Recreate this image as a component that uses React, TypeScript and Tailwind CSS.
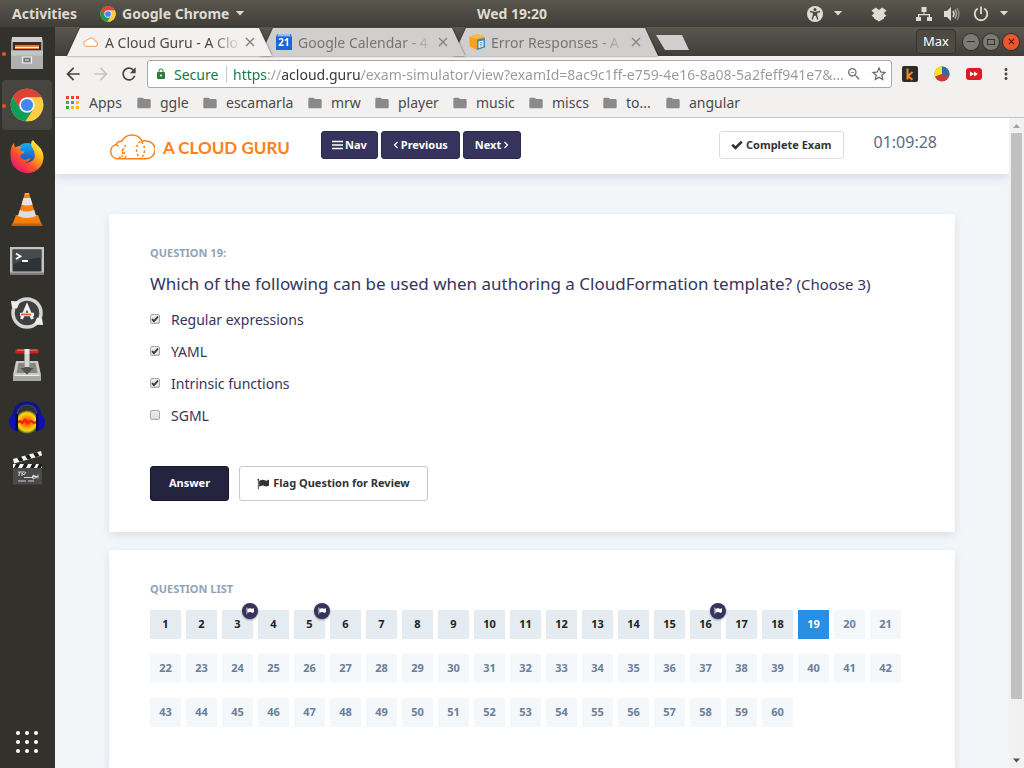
import { useState } from "react";
import type { ReactNode } from "react";
import {
  MdArrowBack,
  MdArrowForward,
  MdRefresh,
  MdLock,
  MdStarBorder,
  MdMoreVert,
  MdFolder,
  MdZoomOut,
} from "react-icons/md";

/* ---------- small icons ---------- */

function ChromeIcon({ className }: { className: string }) {
  return (
    <svg viewBox="0 0 48 48" className={className} aria-hidden="true">
      <circle cx="24" cy="24" r="23" fill="#fcc934" />
      <path d="M24 24 L4.1 12.5 A23 23 0 0 1 43.9 12.5 Z" fill="#db4437" />
      <path d="M24 13 H44.2 A23 23 0 0 0 4.1 12.5 L14 30 Z" fill="#db4437" />
      <path d="M4.1 12.5 A23 23 0 0 0 22 46.9 L33.5 29.5 L24 34 L14.5 30 Z" fill="#0f9d58" />
      <path d="M44.2 13 A23 23 0 0 1 22 46.9 L33.5 29.5 L34 19 L24 13 Z" fill="#ffcd40" />
      <circle cx="24" cy="24" r="11" fill="#f1f1f1" />
      <circle cx="24" cy="24" r="8.6" fill="#4285f4" />
    </svg>
  );
}

function Caret() {
  return (
    <svg viewBox="0 0 10 6" className="h-[5px] w-[10px]" fill="currentColor" aria-hidden="true">
      <path d="M0 0h10L5 5.5z" />
    </svg>
  );
}

function FlagIcon({ className }: { className: string }) {
  return (
    <svg viewBox="0 0 1792 1792" className={className} fill="currentColor" aria-hidden="true">
      <path d="M320 256q0 72-64 110v1266q0 13-9.500 22.500t-22.500 9.500h-64q-13 0-22.500-9.500t-9.500-22.500v-1266q-64-38-64-110 0-53 37.500-90.500t90.500-37.500 90.500 37.500 37.500 90.500zM1792 320v763q0 25-12.500 38.500t-39.500 27.500q-215 116-369 116-61 0-123.500-22t-108.500-48-115.500-48-142.500-22q-192 0-464 146-17 9-33 9-26 0-45-19t-19-45v-742q0-32 31-55 21-14 79-43 236-120 421-120 107 0 200 29t219 88q38 19 88 19 54 0 117.500-21t110-47 88-47 54.500-21q26 0 45 19t19 45z" />
    </svg>
  );
}

function CloudFavicon() {
  return (
    <svg viewBox="0 0 16 16" className="size-4" fill="#fff" stroke="#fbb07a" strokeWidth="1.200" aria-hidden="true">
      <path d="M3.600 12.400a2.900 2.900 0 0 1-.5-5.700A2.600 2.600 0 0 1 5.400 5.300a3.600 3.600 0 0 1 6.300 1.500 2.900 2.900 0 0 1 .9 5.600z" />
    </svg>
  );
}

function CalendarFavicon() {
  return (
    <svg viewBox="0 0 16 16" className="size-4" aria-hidden="true">
      <path d="M0 2h16v14H0z" fill="#1a66d8" />
      <path d="M1 0h14l1 3H0z" fill="#3f86ec" />
      <path d="M2 1h12" stroke="#e6eefc" />
      <text x="8" y="12" textAnchor="middle" fontSize="10" fontWeight="700" fill="#fff" fontFamily="Noto Sans, sans-serif">
        21
      </text>
    </svg>
  );
}

function BoxFavicon() {
  return (
    <svg viewBox="0 0 16 16" className="size-4" aria-hidden="true">
      <path d="M8 0l7.500 2.500v10L8 16 .5 12.500v-10z" fill="#f9a11b" />
      <path d="M8 0l7.500 2.500L8 5 .5 2.500z" fill="#fcbb49" />
      <path d="M8 5.500l8-1.500v9.500L8 16z" fill="#2b8fc9" />
      <path d="M9.500 7.500l5-1v6l-5 1.500z" fill="#fff" />
      <path d="M10.500 8.800l3-.6M10.500 10.500l3-.6M10.500 12.200l3-.7" stroke="#2b8fc9" strokeWidth=".8" />
    </svg>
  );
}

/* ---------- desktop top bar ---------- */

function TopBar() {
  return (
    <header className="grid h-[27px] shrink-0 grid-cols-[1fr_auto_1fr] items-center bg-linear-to-b from-[#5a574e] to-[#403e38] text-[14px] font-bold text-[#dfdbd2]">
      <div className="flex items-center pl-3">
        <button type="button" className="w-[68px] text-left">Activities</button>
        <button type="button" className="ml-5 flex items-center gap-[6px] whitespace-nowrap">
          <ChromeIcon className="size-4" />
          Google Chrome
          <Caret />
        </button>
      </div>
      <time>Wed 19:20</time>
      <div className="flex items-center justify-end pr-[15px]">
        <button type="button" aria-label="Accessibility" className="flex items-center gap-[10px]">
          <svg viewBox="0 0 16 16" className="size-4" aria-hidden="true">
            <circle cx="8" cy="8" r="8" fill="#dfdbd2" />
            <circle cx="8" cy="3.600" r="1.500" fill="#4b4942" />
            <path d="M3 5.500l3.500.8v3L5.200 13.500M13 5.500l-3.500.8v3l1.300 4.200" fill="none" stroke="#4b4942" strokeWidth="1.400" />
            <path d="M6 5.800h4v4H6z" fill="#4b4942" />
          </svg>
          <Caret />
        </button>
        <button type="button" aria-label="Dropbox" className="ml-7">
          <svg viewBox="0 0 16 16" className="size-4" fill="currentColor" aria-hidden="true">
            <path d="M4.800 1.500L8 4l3.200-2.500L15.500 4.500 12.800 7.200l2.700 2.500-2.500 1.800v1L8 15.500l-5-3v-1L.5 9.700 3.200 7.200.5 4.500z" />
          </svg>
        </button>
        <button type="button" aria-label="Network" className="ml-[29px]">
          <svg viewBox="0 0 16 16" className="size-4" fill="currentColor" aria-hidden="true">
            <path d="M5.500 1h5v5h-2v2H14v3h2v4h-5v-4h1.700V9.300H3.300V11H5v4H0v-4h2V8h5.500V6h-2z" />
          </svg>
        </button>
        <button type="button" aria-label="Volume" className="ml-3">
          <svg viewBox="0 0 16 16" className="size-4" fill="none" stroke="currentColor" strokeWidth="1.500" aria-hidden="true">
            <path d="M0 5h3l4-4v14l-4-4H0z" fill="currentColor" stroke="none" />
            <path d="M9 5q2 3 0 6" />
            <path d="M11 3.500q3 4.500 0 9" opacity=".65" />
            <path d="M13 2q4 6 0 12" opacity=".4" />
          </svg>
        </button>
        <button type="button" aria-label="Power" className="ml-[13px] flex items-center gap-[10px]">
          <svg viewBox="0 0 16 16" className="size-4" fill="none" stroke="currentColor" strokeWidth="1.800" aria-hidden="true">
            <path d="M8 .5v7.500M4.800 2.500a6.300 6.300 0 1 0 6.400 0" />
          </svg>
          <Caret />
        </button>
      </div>
    </header>
  );
}

/* ---------- dock ---------- */

function FilesIcon() {
  return (
    <svg viewBox="0 0 34 34" className="size-[34px]" aria-hidden="true">
      <path d="M2 1.500h30l1 4V32q0 1-1 1H2q-1 0-1-1V5.500z" fill="#9a9a9a" />
      <path d="M2 1h30v5H2z" fill="#cfcfcf" />
      <path d="M3 6h28v9H3z" fill="#3c2b22" />
      <path d="M5 9h24v4H5z" fill="#e8772e" />
      <path d="M5 11.500h24" stroke="#fff3e3" strokeWidth="1.200" />
      <path d="M1 14.500h32V32q0 1-1 1H2q-1 0-1-1z" fill="#b0b0b0" />
      <path d="M1 14.500h32v5H1z" fill="#c4c4c4" />
      <path d="M12.500 21h9v6h-9z" fill="#8b8b8b" stroke="#f2f2f2" strokeWidth="1.200" />
      <path d="M14.500 23h5v2h-5z" fill="#e9e9e9" stroke="#555" strokeWidth=".7" />
    </svg>
  );
}

function FirefoxIcon() {
  return (
    <svg viewBox="0 0 36 36" className="size-9" aria-hidden="true">
      <defs>
        <linearGradient id="ffx-body" x1="0.850" y1="0.100" x2="0.150" y2="0.900">
          <stop offset="0" stopColor="#fff44f" />
          <stop offset=".35" stopColor="#ffa318" />
          <stop offset=".65" stopColor="#ff4a2d" />
          <stop offset="1" stopColor="#e3157a" />
        </linearGradient>
        <linearGradient id="ffx-globe" x1="0" y1="0" x2="0" y2="1">
          <stop offset="0" stopColor="#15b3f5" />
          <stop offset="1" stopColor="#2130a8" />
        </linearGradient>
      </defs>
      <circle cx="18" cy="16" r="12" fill="url(#ffx-globe)" />
      <path
        d="M1.500 14Q1.500 7 5 4q0 3 1.500 4.500Q9 6.500 12.500 8q-1.500 1.500-1.500 3.500 2 1 4.500 1-.5 2-3.500 3-1.500 2 .5 4 3 2 6 .5l3-1q-1.500 4-5.500 4.500 7 1 9.500-5 1-5-2-9.500-2-2.500-1-6.500l1.500-1.500q2 3.500 5.500 6 5 5 5 12-1 10-9 13.500-9 4-17-1.500Q1 26 1.500 14z"
        fill="url(#ffx-body)"
      />
    </svg>
  );
}

function VlcIcon() {
  return (
    <svg viewBox="0 0 34 36" className="h-9 w-[34px]" aria-hidden="true">
      <path d="M6 24h22l4 10.500H2z" fill="#f07f0d" />
      <path d="M2 32.500h30l.5 2.500H1.500z" fill="#c85e00" />
      <path d="M15 2h4l7.500 25q-9.500 5-19 0z" fill="#f58210" />
      <path d="M13.500 7h7l2 6.500q-5.500 2-11 0z" fill="#e4e6e8" />
      <path d="M9.800 19q7.200 3 14.400 0l1.800 6q-9 4-18 0z" fill="#dcdfe2" />
      <path d="M15 2h4l.5 1.500h-5z" fill="#ffb056" />
    </svg>
  );
}

function TerminalIcon() {
  return (
    <svg viewBox="0 0 34 30" className="h-[30px] w-[34px]" aria-hidden="true">
      <path d="M0 1h34v27H0z" fill="#c4c4c4" />
      <path d="M0 26.500h34V29H0z" fill="#7d7d7d" />
      <path d="M2.500 3.500h29v22h-29z" fill="#2e3436" />
      <path d="M2.500 3.500h29v8q-14 1-29 7z" fill="#454b4d" />
      <path d="M6 7.500l4.500 2.800L6 13M12 15h6" fill="none" stroke="#fff" strokeWidth="1.800" />
    </svg>
  );
}

function UpdaterIcon() {
  return (
    <svg viewBox="0 0 34 34" className="size-[34px]" aria-hidden="true">
      <circle cx="17" cy="17" r="14" fill="#3f3f3f" stroke="#d5d5d5" strokeWidth="3.500" />
      <path d="M1 5l9 .5-3 7-5-1z" fill="#ededed" />
      <path d="M33 29l-9-.5 3-7 5 1z" fill="#ededed" />
      <path d="M11.500 23l5.500-13 5.500 13" fill="none" stroke="#f0f0f0" strokeWidth="3" />
      <path d="M10 18.500h14" stroke="#f0f0f0" strokeWidth="3.500" />
      <path d="M11 18.500h10" stroke="#e8621d" strokeWidth="1.800" />
    </svg>
  );
}

function TransmissionIcon() {
  return (
    <svg viewBox="0 0 32 36" className="h-9 w-8" aria-hidden="true">
      <path d="M5 14h22l3 14v5q0 1-1 1H3q-1 0-1-1v-5z" fill="#c9cac5" />
      <path d="M7.500 16h17l2 10h-21z" fill="#86887f" />
      <path d="M2 28h28v5q0 1-1 1H3q-1 0-1-1z" fill="#a7a9a2" />
      <path d="M3.500 28.500h25" stroke="#eee" />
      <path d="M13.500 4h5v17h4L16 27.500 9.500 21h4z" fill="#50544f" />
      <path d="M13.500 4h5v16h-5z" fill="#d5d6d2" />
      <path d="M6 2h20q2 0 2 2.200T26 6.500H6q-2 0-2-2.200T6 2z" fill="#d21e1e" />
      <path d="M6 3.200h20" stroke="#f07272" />
      <path d="M13.500 2h5v5h-5z" fill="#e7e7e5" />
    </svg>
  );
}

function AudacityIcon() {
  return (
    <svg viewBox="0 0 36 34" className="h-[34px] w-9" aria-hidden="true">
      <defs>
        <radialGradient id="aud-wave">
          <stop offset="0" stopColor="#f02a0c" />
          <stop offset=".4" stopColor="#fb8a08" />
          <stop offset=".75" stopColor="#f6e011" />
          <stop offset="1" stopColor="#f6e011" stopOpacity="0" />
        </radialGradient>
      </defs>
      <ellipse cx="18" cy="22" rx="12" ry="12" fill="url(#aud-wave)" />
      <path d="M8 23l3-2 2 2 3-3 3 3 3-2 3 2 2-1" fill="none" stroke="#f0280a" strokeWidth="2.500" />
      <path d="M5 17Q6 3 18 3t13 14" fill="none" stroke="#10128e" strokeWidth="3" />
      <path d="M8 14q2-9 10-9t10 9" fill="none" stroke="#3746c9" strokeWidth=".8" />
      <path d="M8 13v18q-8-1-8-9t8-9z" fill="#1010b8" />
      <path d="M28 13v18q8-1 8-9t-8-9z" fill="#1010b8" />
      <path d="M6.500 14h2.500v17H6.500zM27 14h2.500v17H27z" fill="#07074e" />
    </svg>
  );
}

function ClapperIcon() {
  return (
    <svg viewBox="0 0 34 38" className="h-[38px] w-[34px]" aria-hidden="true">
      <path d="M3 14h29v20.500H3z" fill="#4a4a4a" />
      <path d="M3 14h29v4H3z" fill="#f4f4f4" />
      <path d="M6 14h4l-2 4H4zM14 14h4l-2 4h-4zM22 14h4l-2 4h-4zM29 14h3v2l-1 2h-4z" fill="#1c1c1c" />
      <path d="M3 9L31 1l1 4.500L4 13.500z" fill="#f4f4f4" />
      <path d="M7 7.800l4-1.200 2.500 4-4 1.200zM15 5.600l4-1.200 2.500 4-4 1.200zM23 3.300l4-1.200 2.500 4-4 1.200z" fill="#1c1c1c" />
      <path d="M8 22h7M9.500 22l-.5 4M12 26v-3l2 2 2-3M14 27.500h9M23 25v4l4-2zM22 26.500h6M28 24.500v4M8 31h8M18 31h6" fill="none" stroke="#e4e4e4" strokeWidth=".9" />
    </svg>
  );
}

const dockApps: { name: string; icon: ReactNode; running?: boolean; active?: boolean }[] = [
  { name: "Files", icon: <FilesIcon />, running: true },
  { name: "Google Chrome", icon: <ChromeIcon className="size-[34px]" />, running: true, active: true },
  { name: "Firefox", icon: <FirefoxIcon /> },
  { name: "VLC", icon: <VlcIcon /> },
  { name: "Terminal", icon: <TerminalIcon /> },
  { name: "Software Updater", icon: <UpdaterIcon /> },
  { name: "Transmission", icon: <TransmissionIcon /> },
  { name: "Audacity", icon: <AudacityIcon /> },
  { name: "Video Editor", icon: <ClapperIcon /> },
];

function Dock() {
  return (
    <nav aria-label="Dock" className="flex w-[55px] shrink-0 flex-col items-center gap-[2px] bg-[#33312c] pt-px pr-px">
      {dockApps.map((app) => (
        <button
          key={app.name}
          type="button"
          aria-label={app.name}
          className={
            app.active
              ? "relative flex size-[50px] items-center justify-center rounded bg-[#474540]"
              : "relative flex size-[50px] items-center justify-center rounded"
          }
        >
          {app.icon}
          {app.running && <span className="absolute top-6 left-0 size-1 rounded-full bg-[#e95420]" />}
        </button>
      ))}
      <button type="button" aria-label="Show Applications" className="mt-auto mb-[15px] grid grid-cols-3 gap-[5px]">
        {Array.from({ length: 9 }, (_, i) => (
          <span key={i} className="size-1 rounded-full bg-white" />
        ))}
      </button>
    </nav>
  );
}

/* ---------- browser chrome ---------- */

const tabs = [
  { title: "A Cloud Guru - A Clo", icon: <CloudFavicon />, active: true, layer: "z-30" },
  { title: "Google Calendar - 4", icon: <CalendarFavicon />, active: false, layer: "z-20" },
  { title: "Error Responses - A", icon: <BoxFavicon />, active: false, layer: "z-10" },
];

function TabStrip() {
  return (
    <div className="flex h-[29px] items-end bg-linear-to-b from-[#5a574e] to-[#403e38] pr-[5px] pl-3">
      {tabs.map((tab) => (
        <div
          key={tab.title}
          className={`${tab.layer} relative -mr-3 h-7 w-[205px] drop-shadow-[0_0_1px_rgba(0,0,0,0.55)]`}
        >
          <div
            className={
              tab.active
                ? "flex h-full items-center bg-[#f2f1f0] px-4 text-[#4a4a4a] [clip-path:polygon(0_100%,13px_0,calc(100%-13px)_0,100%_100%)]"
                : "flex h-full items-center bg-[#d0cfcd] px-4 text-[#757575] [clip-path:polygon(0_100%,13px_0,calc(100%-13px)_0,100%_100%)]"
            }
          >
            <span className="shrink-0">{tab.icon}</span>
            <button
              type="button"
              className="ml-[6px] w-[136px] text-left text-[14px] whitespace-nowrap [mask-image:linear-gradient(to_right,black_78%,transparent)]"
            >
              {tab.title}
            </button>
            <button type="button" aria-label="Close tab" className="ml-1">
              <svg viewBox="0 0 10 10" className="size-[10px]" stroke="#888" strokeWidth="1.500" aria-hidden="true">
                <path d="M1 1l8 8M9 1l-8 8" />
              </svg>
            </button>
          </div>
        </div>
      ))}
      <button
        type="button"
        aria-label="New tab"
        className="mb-[6px] ml-[10px] h-[15px] w-[33px] bg-[#d0cfcd] [clip-path:polygon(0_0,26px_0,100%_100%,9px_100%)]"
      />
      <div className="ml-auto flex h-full items-center gap-1">
        <button
          type="button"
          className="mr-[3px] h-[25px] w-10 rounded border border-[#35332f] bg-[#4c4a43] text-[13px] text-white"
        >
          Max
        </button>
        <button
          type="button"
          aria-label="Minimize"
          className="flex size-4 items-center justify-center rounded-full bg-[#7c7a72] ring-1 ring-[#35332f]"
        >
          <span className="h-px w-2 bg-[#35332f]" />
        </button>
        <button
          type="button"
          aria-label="Maximize"
          className="flex size-4 items-center justify-center rounded-full bg-[#7c7a72] ring-1 ring-[#35332f]"
        >
          <span className="h-[6px] w-2 border border-[#35332f]" />
        </button>
        <button
          type="button"
          aria-label="Close window"
          className="flex size-4 items-center justify-center rounded-full bg-[#f0562d] ring-1 ring-[#35332f]"
        >
          <svg viewBox="0 0 8 8" className="size-[7px]" stroke="#4a1a0c" strokeWidth="1.300" aria-hidden="true">
            <path d="M1 1l6 6M7 1L1 7" />
          </svg>
        </button>
      </div>
    </div>
  );
}

function Toolbar() {
  return (
    <div className="flex h-9 items-center bg-[#f2f1f0] pr-[9px] pl-2 text-[#5a5a5a]">
      <button type="button" aria-label="Back" className="w-7 text-[#444]">
        <MdArrowBack className="size-5" />
      </button>
      <button type="button" aria-label="Forward" className="w-7 text-[#c6c5c3]">
        <MdArrowForward className="size-5" />
      </button>
      <button type="button" aria-label="Reload" className="w-7 text-[#444]">
        <MdRefresh className="size-5" />
      </button>
      <div className="flex h-7 min-w-0 flex-1 items-center rounded-[3px] border border-[#a9a8a6] bg-white px-[7px]">
        <MdLock className="size-3 text-[#2e7d3a]" />
        <span className="ml-[7px] w-[52px] text-[14px] text-[#0b8043]">Secure</span>
        <span className="h-4 w-px bg-[#c8c8c8]" />
        <input
          type="text"
          aria-label="Address"
          defaultValue="https://acloud.guru/exam-simulator/view?examId=8ac9c1ff-e759-4e16-8a08-5a2feff941e7&..."
          className="ml-[6px] min-w-0 flex-1 bg-[linear-gradient(to_right,#0b8043_34px,#999_34px,#999_48px,#333_48px,#333_128px,#999_128px)] bg-clip-text text-[14px] text-transparent outline-none"
        />
        <button type="button" aria-label="Zoom">
          <MdZoomOut className="size-4 text-[#757575]" />
        </button>
        <button type="button" aria-label="Bookmark this page" className="ml-2">
          <MdStarBorder className="-mr-1 size-[18px] text-[#666]" />
        </button>
      </div>
      <button type="button" aria-label="K extension" className="ml-[10px]">
        <svg viewBox="0 0 16 16" className="size-4" aria-hidden="true">
          <rect width="16" height="16" rx="2" fill="#2b2b2b" />
          <path d="M5.500 2.500v11M10.500 6L6 10l4.500 3.800" fill="none" stroke="#f58a1f" strokeWidth="2" />
        </svg>
      </button>
      <button type="button" aria-label="Chart extension" className="ml-4">
        <svg viewBox="0 0 16 16" className="size-4" aria-hidden="true">
          <circle cx="8" cy="8" r="7.500" fill="#c23c3c" />
          <path d="M8 8V.5A7.500 7.500 0 0 0 1 10.500z" fill="#f5e616" />
          <path d="M8 8V.5a7.500 7.500 0 0 1 7 10z" fill="#2f6fa8" />
        </svg>
      </button>
      <button type="button" aria-label="Video extension" className="ml-4">
        <svg viewBox="0 0 16 16" className="size-4" aria-hidden="true">
          <rect y="2" width="16" height="12" rx="3" fill="#e01926" />
          <path d="M4 5.500l4 2.500-4 2.500zM8 5.500l4 2.500-4 2.500z" fill="#fff" />
        </svg>
      </button>
      <button type="button" aria-label="Menu" className="ml-[15px]">
        <MdMoreVert className="size-[18px] text-[#4a4a4a]" />
      </button>
    </div>
  );
}

const bookmarks = [
  { name: "ggle", width: "w-[66px]" },
  { name: "escamarla", width: "w-[105px]" },
  { name: "mrw", width: "w-[67px]" },
  { name: "player", width: "w-[78px]" },
  { name: "music", width: "w-[76px]" },
  { name: "miscs", width: "w-[74px]" },
  { name: "to...", width: "w-[63px]" },
  { name: "angular", width: "w-[90px]" },
];

const appDots = [
  "bg-[#ea4335]",
  "bg-[#ea4335]",
  "bg-[#ea4335]",
  "bg-[#34a853]",
  "bg-[#4285f4]",
  "bg-[#fbbc05]",
  "bg-[#34a853]",
  "bg-[#fbbc05]",
  "bg-[#fbbc05]",
];

function BookmarksBar() {
  return (
    <div className="flex h-[26px] items-center border-b border-[#c4c3c1] bg-[#f2f1f0] pb-1 pl-[11px] text-[14px] text-[#4a4a4a]">
      <a href="#apps" className="flex w-[70px] items-center gap-[10px]">
        <span className="grid grid-cols-3 gap-[2px]">
          {appDots.map((color, i) => (
            <span key={i} className={`${color} size-[3px]`} />
          ))}
        </span>
        Apps
      </a>
      {bookmarks.map((b) => (
        <a key={b.name} href={`#${b.name}`} className={`${b.width} flex shrink-0 items-center gap-2 whitespace-nowrap`}>
          <MdFolder className="size-4 shrink-0 text-[#8a8a8a]" />
          {b.name}
        </a>
      ))}
    </div>
  );
}

/* ---------- exam page ---------- */

function Logo() {
  return (
    <a href="#home" className="flex w-[212px] shrink-0 items-center gap-2 text-[#ff7f1a]">
      <svg viewBox="0 0 46 27" className="h-[27px] w-[46px]" fill="none" stroke="currentColor" strokeWidth="1.500" aria-hidden="true">
        <path d="M8.200 25.700H37A8.800 8.800 0 0 0 37.500 8Q35 7.300 33.300 8.300A11.500 11.500 0 0 0 12.700 8.300Q8.500 8 7.400 11.500A7.200 7.200 0 0 0 8.200 25.700z" />
        <path d="M7.500 12.500q2 0 2.500 2.500M16.500 12q-.5 3-3 4.500M12.500 17q2.500 1 3 4M14 19q-1 3-1 6M10 24l2 1M17 23l-1.500 2" strokeDasharray="2 1.300" />
        <path d="M31.500 8.500q-4 2-4 8t4 8.500M32.500 9q3 3 3 8t-3 7.500" strokeDasharray="2.400 2.200" />
      </svg>
      <span className="pt-1 font-[Lato] text-[17px] font-bold whitespace-nowrap">A CLOUD GURU</span>
    </a>
  );
}

function ExamHeader() {
  const dark =
    "flex h-7 items-center gap-[2px] rounded-[3px] border border-[#2c2a4c] bg-[#36345c] text-[11px] font-bold text-white";
  return (
    <header className="relative z-10 flex h-14 shrink-0 items-center rounded-b-[3px] bg-white pr-[72px] pl-[54px] shadow-[0_3px_10px_rgba(50,60,110,0.16)]">
      <Logo />
      <div className="flex gap-[3px] pb-[2px]">
        <button type="button" className={`${dark} px-[10px]`}>
          <svg viewBox="0 0 11 10" className="h-[10px] w-[11px]" stroke="currentColor" strokeWidth="1.500" aria-hidden="true">
            <path d="M0 1.500h11M0 5h11M0 8.500h11" />
          </svg>
          Nav
        </button>
        <button type="button" className={`${dark} px-[11px]`}>
          <svg viewBox="0 0 6 8" className="h-2 w-[6px]" fill="none" stroke="currentColor" strokeWidth="1.200" aria-hidden="true">
            <path d="M4.500 1L1.500 4l3 3" />
          </svg>
          Previous
        </button>
        <button type="button" className={`${dark} px-[11px]`}>
          Next
          <svg viewBox="0 0 6 8" className="h-2 w-[6px]" fill="none" stroke="currentColor" strokeWidth="1.200" aria-hidden="true">
            <path d="M1.500 1l3 3-3 3" />
          </svg>
        </button>
      </div>
      <button
        type="button"
        className="mb-[2px] ml-auto flex h-7 items-center gap-[3px] rounded-[3px] border border-[#dcdcdc] bg-white px-[11px] text-[11px] font-bold text-[#333]"
      >
        <svg viewBox="0 0 12 10" className="h-[10px] w-3" fill="none" stroke="currentColor" strokeWidth="2.600" aria-hidden="true">
          <path d="M1.200 4.800l3.300 3.200L10.800 1.700" />
        </svg>
        Complete Exam
      </button>
      <time className="mb-2 ml-[30px] text-[16px] text-[#5b6b86]">01:09:28</time>
    </header>
  );
}

const options = ["Regular expressions", "YAML", "Intrinsic functions", "SGML"];

function QuestionCard() {
  const [checked, setChecked] = useState([true, true, true, false]);
  return (
    <section className="rounded-[3px] bg-white px-[41px] pt-8 pb-[31px] shadow-[0_3px_10px_rgba(50,60,110,0.13)]">
      <h2 className="text-[11px] leading-[14px] font-bold text-[#94a3b8]">QUESTION 19:</h2>
      <p className="mt-3 text-[17px] leading-6 text-[#36345c]">
        Which of the following can be used when authoring a CloudFormation template?{" "}
        <small className="text-[15px]">(Choose 3)</small>
      </p>
      <ul className="mt-[7px]">
        {options.map((option, i) => (
          <li key={option} className="h-8">
            <label className="flex h-full w-fit items-center gap-[11px] text-[14px] text-[#36345c]">
              <span className="grid size-[10px]">
                <input
                  type="checkbox"
                  checked={checked[i]}
                  onChange={() => setChecked(checked.map((c, j) => (j === i ? !c : c)))}
                  className="peer size-[10px] appearance-none rounded-[2px] border border-[#a9a9a9] bg-linear-to-b from-[#eee] to-[#dcdcdc] [grid-area:1/1]"
                />
                <svg
                  viewBox="0 0 10 10"
                  className="pointer-events-none invisible size-[10px] peer-checked:visible [grid-area:1/1]"
                  fill="none"
                  stroke="#333"
                  strokeWidth="1.800"
                  aria-hidden="true"
                >
                  <path d="M2 5.200l2 2L8 2.500" />
                </svg>
              </span>
              {option}
            </label>
          </li>
        ))}
      </ul>
      <div className="mt-[35px] flex gap-[10px]">
        <button
          type="button"
          className="h-[35px] w-[79px] rounded-[3px] border border-[#17162b] bg-[#25243f] text-[11px] font-bold text-white"
        >
          Answer
        </button>
        <button
          type="button"
          className="flex h-[35px] w-[189px] items-center justify-center gap-1 rounded-[3px] border border-[#c8c8c8] bg-white text-[11px] font-bold text-[#333]"
        >
          <FlagIcon className="size-3" />
          Flag Question for Review
        </button>
      </div>
    </section>
  );
}

const flagged = [3, 5, 16];
const current = 19;

function cellClass(n: number) {
  if (n === current) return "relative h-[29px] w-[31px] bg-[#288fe4] text-white";
  if (n < current) return "relative h-[29px] w-[31px] bg-[#e4ecf2] text-[#222]";
  return "relative h-[29px] w-[31px] bg-[#f4f8fb] text-[#6b7f99]";
}

function QuestionList() {
  return (
    <section className="mt-[18px] flex-1 rounded-t-[3px] bg-white px-[41px] pt-8 pb-11 shadow-[0_3px_10px_rgba(50,60,110,0.13)]">
      <h2 className="text-[11px] leading-[14px] font-bold text-[#94a3b8]">QUESTION LIST</h2>
      <div className="mt-[14px] flex flex-wrap gap-x-[5px] gap-y-[15px] text-[11px] font-bold">
        {Array.from({ length: 60 }, (_, i) => i + 1).map((n) => (
          <button key={n} type="button" className={cellClass(n)}>
            {n}
            {flagged.includes(n) && (
              <span className="absolute -top-[7px] -right-[5px] z-10 flex size-4 items-center justify-center rounded-full bg-[#36345c] text-white shadow-[0_1px_2px_rgba(0,0,0,0.4)]">
                <FlagIcon className="size-2" />
              </span>
            )}
          </button>
        ))}
      </div>
    </section>
  );
}

function Scrollbar() {
  return (
    <div aria-hidden="true" className="flex w-[15px] shrink-0 flex-col items-center bg-[#f1f1f1]">
      <svg viewBox="0 0 15 15" className="size-[15px] shrink-0" fill="#a3a3a3">
        <path d="M4 10l3.500-4 3.500 4z" />
      </svg>
      <div className="w-[11px] grow-[566] basis-0 bg-[#c1c1c1]" />
      <div className="grow-[54] basis-0" />
      <svg viewBox="0 0 15 15" className="size-[15px] shrink-0" fill="#505050">
        <path d="M4 5.500h7l-3.500 4z" />
      </svg>
    </div>
  );
}

export default function App() {
  return (
    <div className="flex h-screen flex-col overflow-hidden bg-[#33312c] font-['Noto_Sans',sans-serif]">
      <TopBar />
      <div className="flex min-h-0 flex-1">
        <Dock />
        <div className="flex min-w-0 flex-1 flex-col">
          <TabStrip />
          <Toolbar />
          <BookmarksBar />
          <div className="flex min-h-0 flex-1">
            <div className="flex min-w-0 flex-1 flex-col overflow-hidden bg-[#f3f6f9]">
              <ExamHeader />
              <main className="flex flex-1 flex-col px-[54px] pt-10">
                <QuestionCard />
                <QuestionList />
              </main>
            </div>
            <Scrollbar />
          </div>
        </div>
      </div>
    </div>
  );
}
